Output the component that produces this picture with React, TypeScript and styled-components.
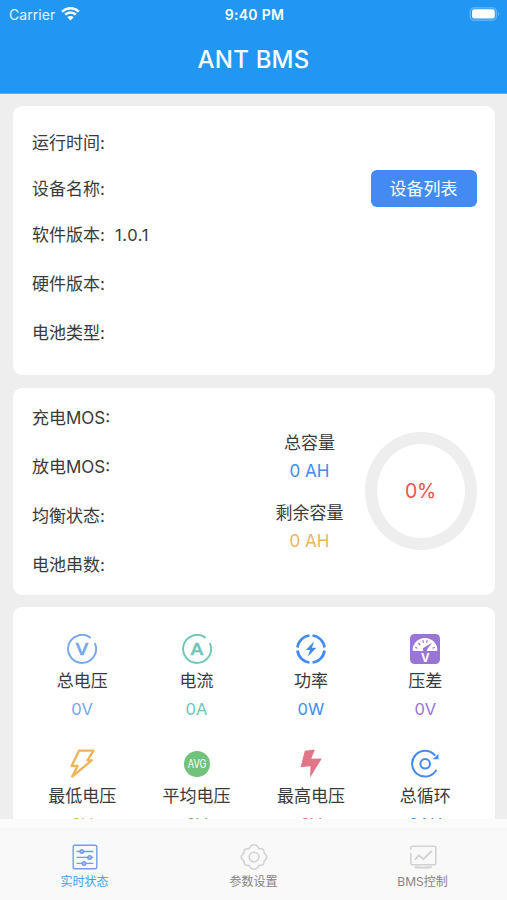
import React from "react";
import styled, { createGlobalStyle } from "styled-components";

const GlobalStyle = createGlobalStyle`
  * { box-sizing: border-box; }
  body { margin: 0; background: #eeeeee; }
`;

const Screen = styled.div`
  display: flex;
  flex-direction: column;
  width: 507px;
  height: 900px;
  overflow: hidden;
  background: #eeeeee;
  color: #3a3a3a;
  font-family: Inter, "Noto Sans CJK SC", sans-serif;
`;

const Header = styled.header`
  flex: none;
  height: 94px;
  background: #2196f3;
  border-bottom: 1px solid #55aef5;
  color: #ffffff;
`;

const StatusBar = styled.div`
  display: grid;
  grid-template-columns: 1fr auto 1fr;
  align-items: center;
  height: 27px;
  padding: 0 7px 0 9px;
  font-size: 14px;
  line-height: 27px;
`;

const Carrier = styled.div`
  display: flex;
  align-items: center;
  gap: 6px;
  letter-spacing: 0.05px;
  color: #e4f3ff;
`;

const Clock = styled.div`
  padding-top: 1px;
  font-size: 14px;
  font-weight: 600;
  letter-spacing: 0.3px;
`;

const BatterySlot = styled.div`
  display: flex;
  justify-content: flex-end;
`;

const Title = styled.h1`
  margin: 0;
  padding-top: 13px;
  text-align: center;
  font-size: 24px;
  line-height: 40px;
  font-weight: 500;
  letter-spacing: 0.2px;
`;

const Content = styled.main`
  flex: 1;
  min-height: 0;
  overflow: hidden;
  display: flex;
  flex-direction: column;
  gap: 12.5px;
  padding: 12px 12.5px 0 13px;
`;

const Card = styled.section<{ $height: number; $pad: string }>`
  flex: none;
  display: flex;
  justify-content: space-between;
  height: ${(p) => p.$height}px;
  padding: ${(p) => p.$pad};
  border-radius: 9px;
  background: #ffffff;
`;

const Rows = styled.div`
  flex: 1;
  display: flex;
  flex-direction: column;
`;

const Row = styled.div<{ $height?: number }>`
  display: flex;
  align-items: center;
  gap: 10px;
  height: ${(p) => p.$height ?? 49}px;
  font-size: 17px;
  line-height: 24px;
`;

const Version = styled.span`
  font-size: 16.5px;
  letter-spacing: 0.6px;
`;

const DeviceButton = styled.button`
  margin-left: auto;
  width: 106px;
  height: 37px;
  padding: 0;
  border: 0;
  border-radius: 6px;
  background: #438bf3;
  color: #ffffff;
  font: inherit;
`;

const Capacity = styled.div`
  display: flex;
  flex-direction: column;
  gap: 14px;
  width: 80px;
  margin: 35px 15px 0 0;
  text-align: center;
`;

const CapacityItem = styled.div`
  font-size: 17px;
  line-height: 28px;
`;

const Amount = styled.div<{ $color: string }>`
  color: ${(p) => p.$color};
  font-size: 17px;
  letter-spacing: 0;
`;

const Ring = styled.div`
  display: flex;
  align-items: center;
  justify-content: center;
  width: 112px;
  height: 118px;
  margin-top: 38px;
  border: 12px solid #eeeeee;
  border-radius: 50%;
  color: #e8524a;
  font-size: 19.5px;
  letter-spacing: -0.3px;
`;

const MetricGrid = styled.div`
  flex: 1;
  display: grid;
  grid-template-columns: repeat(4, 1fr);
  grid-auto-rows: 114.5px;
`;

const Metric = styled.div`
  display: flex;
  flex-direction: column;
  align-items: center;
  font-size: 17px;
  line-height: 28px;

  svg {
    flex: none;
    margin-bottom: 3px;
  }
`;

const MetricValue = styled.div<{ $color: string }>`
  color: ${(p) => p.$color};
  font-size: 16.5px;
  letter-spacing: 0.1px;
`;

const TabBar = styled.nav`
  flex: none;
  display: grid;
  grid-template-columns: repeat(3, 1fr);
  height: 81px;
  background: linear-gradient(#fbfbfb 0 8px, #f6f6f6 9px 10px, #f9f9f9 12px);
`;

const Tab = styled.div<{ $active?: boolean }>`
  display: flex;
  flex-direction: column;
  align-items: center;
  padding-top: 24px;
  color: ${(p) => (p.$active ? "#3a9ff0" : "#858585")};
  font-size: 12px;
  line-height: 20px;

  svg {
    flex: none;
    margin-bottom: 1px;
  }
`;

const IconText = styled.text`
  font-family: Inter, sans-serif;
  text-anchor: middle;
`;

const WifiIcon = () => (
  <svg width="19" height="14" viewBox="0 0 19 14" fill="none" stroke="#fff" strokeWidth="2.5">
    <path d="M1.1 4.6a12 12 0 0 1 16.8 0M4.2 7.7a7.6 7.6 0 0 1 10.6 0" />
    <path d="M6.3 10.3a4.6 4.6 0 0 1 6.4 0L9.5 13.5Z" fill="#fff" stroke="none" />
  </svg>
);

const BatteryIcon = () => (
  <svg width="31" height="14" viewBox="0 0 31 14">
    <rect x="1.3" y="0.8" width="26" height="12.4" rx="3.8" fill="none" stroke="#6cb9f6" strokeWidth="1.3" />
    <rect x="3" y="2.3" width="22.8" height="9.2" rx="2.3" fill="#fff" />
    <path d="M29 4.8q2 2.2 0 4.4Z" fill="#6cb9f6" />
  </svg>
);

const LetterGaugeIcon = ({ letter, color }: { letter: string; color: string }) => (
  <svg width="30" height="30" viewBox="0 0 30 30">
    <path d="M23 3.4A14 14 0 1 0 28.1 9.8" fill="none" stroke={color} strokeWidth="1.9" strokeLinecap="round" />
    <IconText
      x="15"
      y="20.8"
      fontSize="16.5"
      fontWeight="500"
      fill={color}
      stroke={color}
      strokeWidth="0.5"
      strokeLinejoin="round"
      textLength="13.4"
      lengthAdjust="spacingAndGlyphs"
    >
      {letter}
    </IconText>
  </svg>
);

const PowerIcon = () => (
  <svg width="30" height="30" viewBox="0 0 30 30" fill="none" stroke="#438bf3" strokeWidth="2.7">
    <path d="M16.5 1.5A13.6 13.6 0 0 1 28.5 13.5M28.5 16.5A13.6 13.6 0 0 1 16.5 28.5M13.5 28.5A13.6 13.6 0 0 1 1.5 16.5M1.5 13.5A13.6 13.6 0 0 1 13.5 1.5" />
    <path d="M18.2 7.2L9.8 16h4.2l-2.2 6.8L20.4 13.8h-4.5Z" fill="#438bf3" stroke="none" />
  </svg>
);

const VoltmeterIcon = () => (
  <svg width="30" height="30" viewBox="0 0 30 30">
    <rect width="30" height="30" rx="4.5" fill="#9975d6" />
    <path d="M2.6 16.3a12.4 12.4 0 0 1 24.8 0q0 .8-.8.8H3.4q-.8 0-.8-.8Z" fill="#fff" />
    <path d="M5.3 13.4l2.2.8M8.4 9l1.9 2M12.8 6.1l.7 2.8M17.2 6.1l-.7 2.8M24.7 13.4l-2.2.8" stroke="#9975d6" strokeWidth="1.2" />
    <path d="M22.2 8.4L17.2 15.2a2.2 2.2 0 1 1-2.6-2Z" fill="#9975d6" />
    <IconText x="15.2" y="27.5" fontSize="11.5" fontWeight="700" fill="#fff">
      V
    </IconText>
  </svg>
);

const LowBoltIcon = () => (
  <svg width="30" height="30" viewBox="0 0 30 30" fill="none" stroke="#edb45c" strokeWidth="2.3" strokeLinejoin="round">
    <path d="M12 1.7H26.5L20.5 11.3H24.8L5.2 27.6 10.6 17H4.6Z" />
  </svg>
);

const AverageIcon = () => (
  <svg width="30" height="30" viewBox="0 0 30 30">
    <circle cx="15" cy="15" r="13" fill="#72c27b" />
    <IconText x="15" y="19.1" fontSize="12" fill="#fff" textLength="18.5" lengthAdjust="spacingAndGlyphs">
      AVG
    </IconText>
  </svg>
);

const HighBoltIcon = () => (
  <svg width="30" height="30" viewBox="0 0 30 30" fill="#e27688">
    <path d="M8.8 1.8L18.8 .5 15.3 9.8 25.8 9.6 14.1 28.5 14.4 17.2 4.6 18.2Z" />
  </svg>
);

const CycleIcon = () => (
  <svg width="30" height="30" viewBox="0 0 30 30" fill="none" stroke="#438bf3" strokeWidth="2">
    <path d="M26 21.5A12.9 12.9 0 1 1 24.6 6" strokeLinecap="round" />
    <circle cx="15.2" cy="14.8" r="4.8" />
    <path d="M28.5 5.1V10.3H22.6Z" fill="#438bf3" stroke="none" />
  </svg>
);

const SlidersTabIcon = () => (
  <svg width="28" height="28" viewBox="0 0 28 28" fill="none" stroke="#729ee8" strokeWidth="1.4">
    <rect x="2.2" y="2.2" width="23.6" height="23.6" rx="1.8" />
    <path d="M5.5 8.5h16.8M5.5 14.4h16.8M5.5 20.4h16.8" />
    <g fill="#a8c4ef">
      <circle cx="10.8" cy="8.5" r="1.8" />
      <circle cx="18.6" cy="14.4" r="1.8" />
      <circle cx="13" cy="20.4" r="1.8" />
    </g>
  </svg>
);

const GearTabIcon = () => (
  <svg width="28" height="28" viewBox="0 0 28 28" fill="none" stroke="#d2d2d2" strokeWidth="1.6" strokeLinejoin="round">
    <path d="M11.2 2.6Q14 .8 16.8 2.6L19 5.6 22.6 6Q24.2 7 24.1 9.8L26.6 13Q27 14 26.6 15L24.1 18.2Q24.2 21 22.6 22L19 22.4 16.8 25.4Q14 27.2 11.2 25.4L9 22.4 5.4 22Q3.8 21 3.9 18.2L1.4 15Q1 14 1.4 13L3.9 9.8Q3.8 7 5.4 6L9 5.6Z" />
    <circle cx="14" cy="14" r="4.8" />
  </svg>
);

const ChartTabIcon = () => (
  <svg width="28" height="28" viewBox="0 0 28 28" fill="none" stroke="#d2d2d2" strokeWidth="1.6">
    <path d="M1.8 7V4.8q0-1.5 1.5-1.5h22q1.5 0 1.5 1.5v15.4q0 1.5-1.5 1.5h-22q-1.5 0-1.5-1.5V10" />
    <path d="M6.2 16.3L9.9 12.4 14.3 16.3 22.5 8.2M6.5 24.2q7 .8 15.5 0" strokeWidth="1.9" strokeLinecap="round" />
  </svg>
);

const metrics = [
  { label: "总电压", value: "0V", color: "#76a7ef", icon: <LetterGaugeIcon letter="V" color="#76a7ef" /> },
  { label: "电流", value: "0A", color: "#70c5b8", icon: <LetterGaugeIcon letter="A" color="#70c5b8" /> },
  { label: "功率", value: "0W", color: "#438bf3", icon: <PowerIcon /> },
  { label: "压差", value: "0V", color: "#9975d6", icon: <VoltmeterIcon /> },
  { label: "最低电压", value: "0V", color: "#edb45c", icon: <LowBoltIcon /> },
  { label: "平均电压", value: "0V", color: "#62bd6d", icon: <AverageIcon /> },
  { label: "最高电压", value: "0V", color: "#e27688", icon: <HighBoltIcon /> },
  { label: "总循环", value: "0AH", color: "#438bf3", icon: <CycleIcon /> },
];

export default function App() {
  return (
    <Screen>
      <GlobalStyle />
      <Header>
        <StatusBar>
          <Carrier>
            Carrier
            <WifiIcon />
          </Carrier>
          <Clock>9:40 PM</Clock>
          <BatterySlot>
            <BatteryIcon />
          </BatterySlot>
        </StatusBar>
        <Title>ANT BMS</Title>
      </Header>

      <Content>
        <Card $height={269} $pad="12px 18px 0 19px">
          <Rows>
            <Row>运行时间:</Row>
            <Row $height={43}>
              设备名称:
              <DeviceButton>设备列表</DeviceButton>
            </Row>
            <Row>
              软件版本:<Version>1.0.1</Version>
            </Row>
            <Row>硬件版本:</Row>
            <Row>电池类型:</Row>
          </Rows>
        </Card>

        <Card $height={207} $pad="6px 18px 0 19px">
          <Rows>
            <Row>充电MOS:</Row>
            <Row>放电MOS:</Row>
            <Row>均衡状态:</Row>
            <Row>电池串数:</Row>
          </Rows>
          <Capacity>
            <CapacityItem>
              总容量
              <Amount $color="#438bf3">0 AH</Amount>
            </CapacityItem>
            <CapacityItem>
              剩余容量
              <Amount $color="#edb45c">0 AH</Amount>
            </CapacityItem>
          </Capacity>
          <Ring>0%</Ring>
        </Card>

        <Card $height={270} $pad="27px 12px 0">
          <MetricGrid>
            {metrics.map((m) => (
              <Metric key={m.label}>
                {m.icon}
                {m.label}
                <MetricValue $color={m.color}>{m.value}</MetricValue>
              </Metric>
            ))}
          </MetricGrid>
        </Card>
      </Content>

      <TabBar>
        <Tab $active>
          <SlidersTabIcon />
          实时状态
        </Tab>
        <Tab>
          <GearTabIcon />
          参数设置
        </Tab>
        <Tab>
          <ChartTabIcon />
          BMS控制
        </Tab>
      </TabBar>
    </Screen>
  );
}
